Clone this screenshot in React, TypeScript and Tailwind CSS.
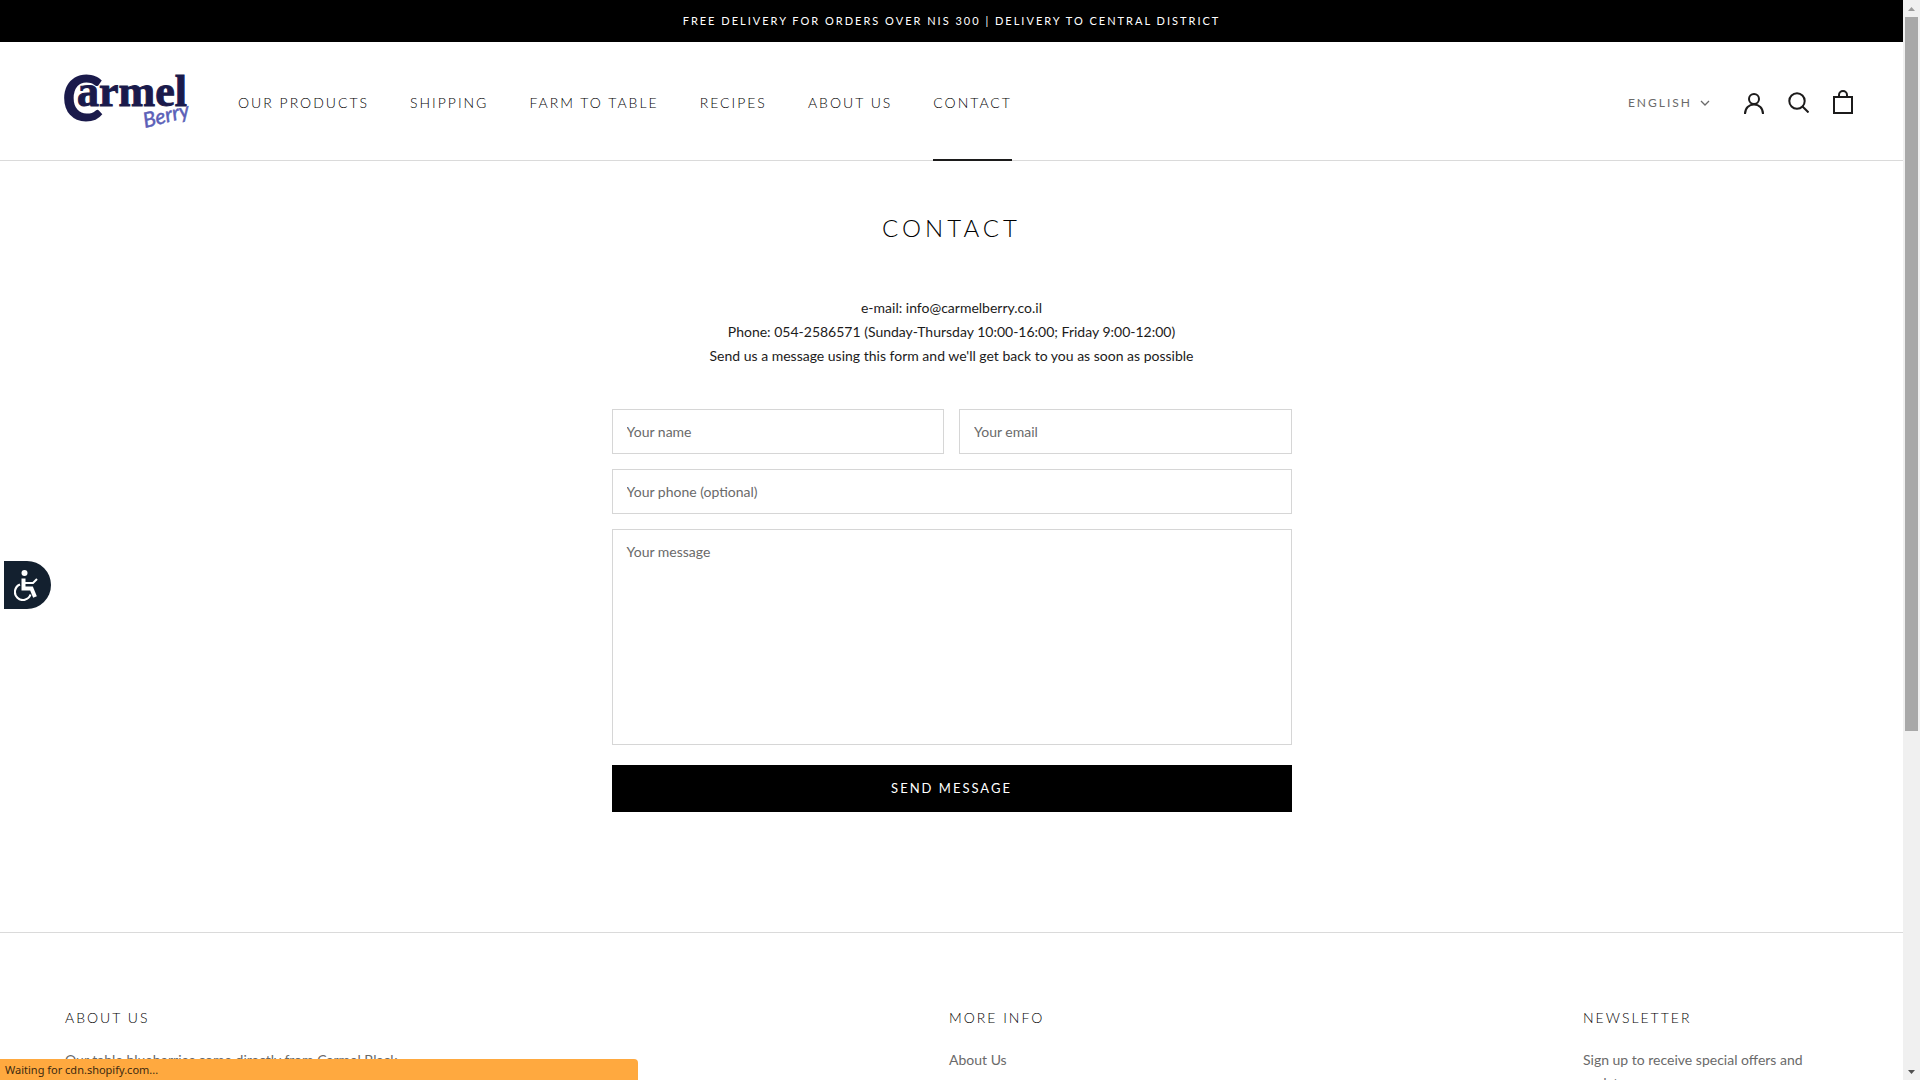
import React from "react";

const navItems = ["Our products", "Shipping", "Farm to table", "Recipes", "About us", "Contact"];

function Logo() {
  return (
    <svg viewBox="0 0 130 70" className="h-[70px] w-[130px]" role="img" aria-label="Carmel Berry">
      <g fill="#1a1a4b" stroke="#1a1a4b">
        <text x="-1" y="55" fontFamily="Lato, sans-serif" fontWeight="900" fontSize="62" stroke="none">C</text>
        <text x="14" y="40" fontFamily="'Liberation Serif', serif" fontWeight="700" fontSize="44" strokeWidth="1">armel</text>
      </g>
      <text x="82" y="62" transform="rotate(-14 82 62)" fontFamily="Lato, sans-serif" fontStyle="italic" fontWeight="400" fontSize="21" fill="#5b5fb8" stroke="#5b5fb8" strokeWidth="0.5">
        Berry
      </text>
    </svg>
  );
}

function Header() {
  return (
    <header className="flex h-[119px] items-center border-b border-[#dadada] pr-[50px] pl-[63px]">
      <a href="#home" className="mr-[45px] shrink-0">
        <Logo />
      </a>
      <nav className="flex h-full gap-[41px]">
        {navItems.map((item) => (
          <a
            key={item}
            href={"#" + item}
            className="relative flex items-center pt-[3px] text-sm font-light tracking-[2px] text-black uppercase"
          >
            {item}
            {item === "Contact" && <span className="absolute inset-x-0 -bottom-px h-[2px] bg-[#1c1b1b]" />}
          </a>
        ))}
      </nav>
      <div className="ml-auto flex items-center pt-[2px]">
        <button type="button" className="mr-[34px] flex items-center gap-2 pt-px text-xs tracking-[2px] text-[#6a6a6a] uppercase">
          English
          <svg viewBox="0 0 10 6" className="h-[6px] w-[10px]" fill="none" stroke="currentColor" strokeWidth="1.3">
            <path d="M1 1l4 4 4-4" />
          </svg>
        </button>
        <div className="flex items-center gap-6 text-[#1c1b1b]">
          <a href="#account" aria-label="Account" className="pt-[2px]">
            <svg viewBox="0 0 20 22" className="h-[22px] w-5" fill="none" stroke="currentColor" strokeWidth="2">
              <circle cx="10" cy="7" r="5" />
              <path d="M1 22c0-6 4-9.500 9-9.500s9 3.500 9 9.500" />
            </svg>
          </a>
          <a href="#search" aria-label="Search">
            <svg viewBox="0 0 21 21" className="size-[21px]" fill="none" stroke="currentColor" strokeWidth="2">
              <circle cx="9" cy="9" r="7.700" />
              <path d="M14.500 14.500l6 6" />
            </svg>
          </a>
          <a href="#cart" aria-label="Cart">
            <svg viewBox="0 0 20 24" className="h-6 w-5" fill="none" stroke="currentColor" strokeWidth="2">
              <path d="M1 7h18v16H1z" />
              <path d="M6 7V5a4 4 0 0 1 8 0v2" />
            </svg>
          </a>
        </div>
      </div>
    </header>
  );
}

const fieldClass =
  "block w-full border border-[#d6d6d6] bg-white px-[14px] py-[10px] text-sm leading-[23px] text-[#1c1b1b] outline-none placeholder:text-[#6a6a6a] placeholder:opacity-100";

function ContactForm() {
  return (
    <form className="mt-[41px] grid grid-cols-2 gap-[15px]" onSubmit={(e) => e.preventDefault()}>
      <input type="text" aria-label="Your name" placeholder="Your name" className={fieldClass} />
      <input type="email" aria-label="Your email" placeholder="Your email" className={fieldClass} />
      <input type="tel" aria-label="Your phone (optional)" placeholder="Your phone (optional)" className={"col-span-2 " + fieldClass} />
      <textarea aria-label="Your message" placeholder="Your message" className={"col-span-2 h-[216px] resize-none " + fieldClass} />
      <button type="submit" className="col-span-2 mt-[5px] h-[47px] bg-black text-[13px] tracking-[2px] text-white uppercase">
        Send message
      </button>
    </form>
  );
}

const footerHeadingClass = "text-sm leading-5 font-light tracking-[2px] text-black uppercase";
const footerTextClass = "mt-[20px] block text-sm leading-[23px] text-[#6a6a6a]";

function Footer() {
  return (
    <footer className="grid grid-cols-[884fr_634fr_255fr] border-t border-[#dadada] px-[65px] pt-[75px]">
      <section>
        <h2 className={footerHeadingClass}>About us</h2>
        <p className={footerTextClass}>Our table blueberries come directly from Carmel Black</p>
      </section>
      <section>
        <h2 className={footerHeadingClass}>More info</h2>
        <a href="#about" className={footerTextClass}>About Us</a>
      </section>
      <section>
        <h2 className={footerHeadingClass}>Newsletter</h2>
        <p className={footerTextClass}>
          Sign up to receive special offers and
          <br />
          updates
        </p>
      </section>
    </footer>
  );
}

function Scrollbar() {
  return (
    <div className="flex w-[17px] shrink-0 flex-col items-center bg-[#f0f0f0]" aria-hidden="true">
      <svg viewBox="0 0 17 17" className="size-[17px] shrink-0">
        <path d="M5 11h7L8.500 7z" fill="#9b9b9b" />
      </svg>
      <div className="flex w-full flex-1 justify-center">
        <div className="h-[68.300%] w-[13px] bg-[#a8a8a8]" />
      </div>
      <svg viewBox="0 0 17 17" className="size-[17px] shrink-0">
        <path d="M5 7h7l-3.500 4z" fill="#505050" />
      </svg>
    </div>
  );
}

export default function App() {
  return (
    <div className="flex h-screen overflow-hidden bg-white font-['Lato',sans-serif] text-[#1c1b1b]">
      <div className="min-w-0 flex-1 overflow-hidden">
        <p className="bg-black py-[11px] text-center text-[11px] leading-5 tracking-[2px] text-white uppercase">
          Free delivery for orders over NIS 300 | Delivery to central district
        </p>
        <Header />
        <main className="mx-auto max-w-[680px] pt-[49px] pb-[120px]">
          <h1 className="text-center text-2xl leading-9 font-light tracking-[4px] text-black uppercase">Contact</h1>
          <p className="mt-[50px] text-center text-sm leading-6 text-[#1c1b1b]">
            e-mail: info@carmelberry.co.il
            <br />
            Phone: 054-2586571 (Sunday-Thursday 10:00-16:00; Friday 9:00-12:00)
            <br />
            Send us a message using this form and we'll get back to you as soon as possible
          </p>
          <ContactForm />
        </main>
        <Footer />
      </div>
      <Scrollbar />
      <button
        type="button"
        aria-label="Accessibility"
        className="fixed top-[561px] left-1 flex h-12 w-[47px] items-center justify-center rounded-r-full bg-[#13202f]"
      >
        <svg viewBox="0 0 24 31" className="mr-1 h-[31px] w-6" fill="none" stroke="white">
          <circle cx="10.500" cy="3" r="3" fill="white" stroke="none" />
          <path d="M9.500 8.500v10h8l3.500 8.500" strokeWidth="4" />
          <path d="M10 13h9l4-4" strokeWidth="2" />
          <path d="M6 14.500a8 8 0 1 0 10.500 10" strokeWidth="2.200" />
        </svg>
      </button>
      <div className="fixed bottom-0 left-0 h-[21px] w-[638px] rounded-tr-[4px] bg-[#ffa93f] px-[5px] font-['Noto_Sans',sans-serif] text-[11px] leading-[22px] text-[#3d2a10]">
        Waiting for cdn.shopify.com...
      </div>
    </div>
  );
}
